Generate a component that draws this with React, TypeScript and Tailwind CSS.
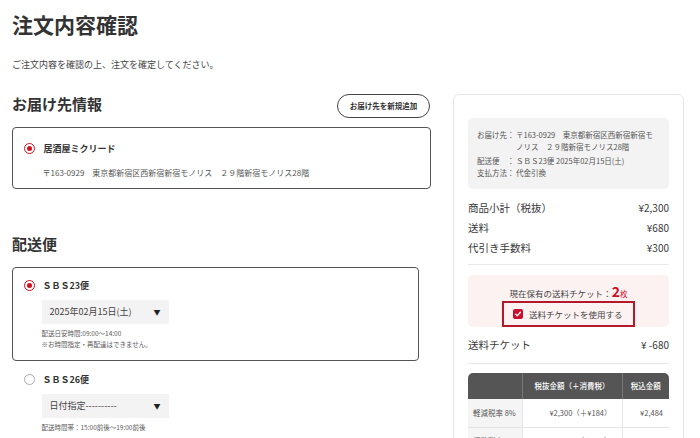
import React from 'react';

const RED = '#c8102e';

function Radio({ checked }: { checked: boolean }) {
  if (checked) {
    return (
      <span className="flex h-[11px] w-[11px] shrink-0 items-center justify-center rounded-full border-[1.5px] border-[#d0101e]">
        <span className="h-[5px] w-[5px] rounded-full bg-[#d0101e]" />
      </span>
    );
  }
  return <span className="h-[11px] w-[11px] shrink-0 rounded-full border border-[#aaaaaa] bg-white" />;
}

function DateSelect({ label }: { label: string }) {
  return (
    <div className="mt-[7.5px] ml-[18px] flex h-[24px] w-[127px] items-center justify-between bg-[#f3f3f3] pl-2 pr-[8px]">
      <span className="text-[9px] leading-[12px] text-[#444]">{label}</span>
      <span className="text-[7px] leading-[8px] text-[#222]">▼</span>
    </div>
  );
}

interface ShippingOption {
  name: string;
  date: string;
  notes: string[];
  checked: boolean;
}

const SHIPPING: ShippingOption[] = [
  {
    name: 'ＳＢＳ23便',
    date: '2025年02月15日(土)',
    notes: ['配送日安時間:09:00〜14:00', '※お時間指定・再配達はできません。'],
    checked: true,
  },
  {
    name: 'ＳＢＳ26便',
    date: '日付指定----------',
    notes: ['配送時間帯：15:00前後〜19:00前後'],
    checked: false,
  },
];

const TAX_ROWS = [
  { label: '軽減税率 8%', base: '¥2,300（＋¥184）', total: '¥2,484' },
  { label: '標準税率 10%', base: '¥300（＋¥30）', total: '¥330' },
];

export default function App() {
  return (
    <div className="min-h-screen bg-white pl-3 pr-4 font-['Noto_Sans_CJK_JP','Noto_Sans',sans-serif] text-[#333]">
      <h1 className="mt-2 text-[21px] font-bold leading-[32px]">注文内容確認</h1>
      <p className="mt-[18px] text-[9px] leading-[14px] text-[#444]">
        ご注文内容を確認の上、注文を確定してください。
      </p>

      <div className="mt-[22px] flex gap-[22px]">
        {/* left column */}
        <div className="w-[419px] shrink-0">
          <div className="flex items-start justify-between">
            <h2 className="text-[15px] font-bold leading-[20px]">お届け先情報</h2>
            <button className="mr-[1px] flex h-[24px] w-[93px] items-center justify-center rounded-full border-[1.5px] border-[#444] text-[7.5px] font-bold text-[#333]">
              お届け先を新規追加
            </button>
          </div>

          <div className="mt-[9px] rounded-[4px] border-[1.5px] border-[#555] pt-[14px] pb-[9.5px] pl-[10.5px]">
            <div className="flex items-center gap-[9px]">
              <Radio checked />
              <span className="text-[9px] font-bold leading-[13px] text-[#333]">居酒屋ミクリード</span>
            </div>
            <p className="mt-[11.5px] pl-[19px] text-[8px] leading-[12px] text-[#555]">
              〒163-0929　東京都新宿区西新宿新宿モノリス　２９階新宿モノリス28階
            </p>
          </div>

          <h2 className="mt-[45px] text-[15px] font-bold leading-[20px]">配送便</h2>

          <div className="mt-[13px]">
            {SHIPPING.map((opt) => (
              <div
                key={opt.name}
                className={`w-[407px] rounded-[4px] border-[1.5px] pt-[11px] pb-[10px] pl-[10.5px] ${
                  opt.checked ? 'border-[#555]' : 'border-transparent'
                }`}
              >
                <div className="flex items-center gap-[8px]">
                  <Radio checked={opt.checked} />
                  <span className="text-[9px] font-bold leading-[13px] text-[#333]">{opt.name}</span>
                </div>
                <DateSelect label={opt.date} />
                <div className="mt-[4.5px] pl-[18px]">
                  {opt.notes.map((n) => (
                    <p key={n} className="text-[6.5px] leading-[11px] text-[#5a5a5a]">
                      {n}
                    </p>
                  ))}
                </div>
              </div>
            ))}
          </div>
        </div>

        {/* summary */}
        <aside className="w-[231px] shrink-0 self-start rounded-[6px] border border-[#e5e5e5] px-[14px] pt-[23px] pb-4">
          <div className="rounded-[5px] bg-[#f3f3f3] pt-[11px] pb-[10px] pl-[9px] pr-[8px] text-[7.5px] leading-[12px] text-[#555]">
            <div className="flex">
              <span className="w-[30px] shrink-0">お届け先</span>
              <span className="w-[9px] shrink-0">：</span>
              <span>
                〒163-0929　東京都新宿区西新宿新宿モ
                <br />
                ノリス　２９階新宿モノリス28階
              </span>
            </div>
            <div className="mt-[2px] flex">
              <span className="w-[30px] shrink-0">配送便</span>
              <span className="w-[9px] shrink-0">：</span>
              <span>ＳＢＳ23便 2025年02月15日(土)</span>
            </div>
            <div className="flex">
              <span className="w-[30px] shrink-0">支払方法</span>
              <span className="w-[9px] shrink-0">：</span>
              <span>代金引換</span>
            </div>
          </div>

          <div className="mt-[9px] text-[10.5px] leading-[20px] text-[#3a3a3a]">
            <div className="flex justify-between">
              <span>商品小計（税抜）</span>
              <span className="text-[10px]">¥2,300</span>
            </div>
            <div className="flex justify-between">
              <span>送料</span>
              <span className="text-[10px]">¥680</span>
            </div>
            <div className="flex justify-between">
              <span>代引き手数料</span>
              <span className="text-[10px]">¥300</span>
            </div>
          </div>
          <div className="mt-[6px] h-px bg-[#e8e8e8]" />

          <div className="mt-[10px] flex h-[52px] flex-col items-center rounded-[5px] bg-[#fdf2f2] pt-[9px]">
            <p className="flex h-[16px] items-baseline text-[8.5px] leading-[16px] text-[#444]">
              現在保有の送料チケット：
              <span className="text-[14px] font-bold leading-[14px] text-[#c8102e]">2</span>
              <span className="text-[7.5px] text-[#c8102e]">枚</span>
            </p>
            <label className="mt-[1px] flex h-[26px] w-[133px] items-center gap-[6px] border-2 border-[#b3192a] pl-[9px]">
              <span
                className="flex h-[10px] w-[10px] items-center justify-center rounded-[2px]"
                style={{ backgroundColor: RED }}
              >
                <svg viewBox="0 0 10 10" className="h-[8px] w-[8px]">
                  <path d="M2 5.2 L4.1 7.2 L8 2.8" fill="none" stroke="white" strokeWidth="1.6" strokeLinecap="round" strokeLinejoin="round" />
                </svg>
              </span>
              <span className="text-[8.5px] leading-[12px] text-[#444]">送料チケットを使用する</span>
            </label>
          </div>

          <div className="mt-[8px] flex justify-between text-[10.5px] leading-[20px] text-[#3a3a3a]">
            <span>送料チケット</span>
            <span className="text-[10px]">¥ -680</span>
          </div>
          <div className="mt-[8px] h-px bg-[#e8e8e8]" />

          <table className="mt-[9px] w-full border-collapse text-[7.5px]">
            <thead>
              <tr className="h-[26px] bg-[#555] text-white">
                <th className="w-[54px] rounded-tl-[5px] font-medium" />
                <th className="w-[100px] border-l border-[#777] font-medium">税抜金額（＋消費税）</th>
                <th className="rounded-tr-[5px] border-l border-[#777] font-medium">税込金額</th>
              </tr>
            </thead>
            <tbody>
              {TAX_ROWS.map((r) => (
                <tr key={r.label} className="h-[28px] border-b border-[#e5e5e5] text-[#555]">
                  <td className="bg-[#f5f5f5] pl-[5px] text-left">{r.label}</td>
                  <td className="border-l border-[#e5e5e5] pr-[10px] text-right">{r.base}</td>
                  <td className="border-l border-[#e5e5e5] pr-[6px] text-right">{r.total}</td>
                </tr>
              ))}
            </tbody>
          </table>
        </aside>
      </div>
    </div>
  );
}
